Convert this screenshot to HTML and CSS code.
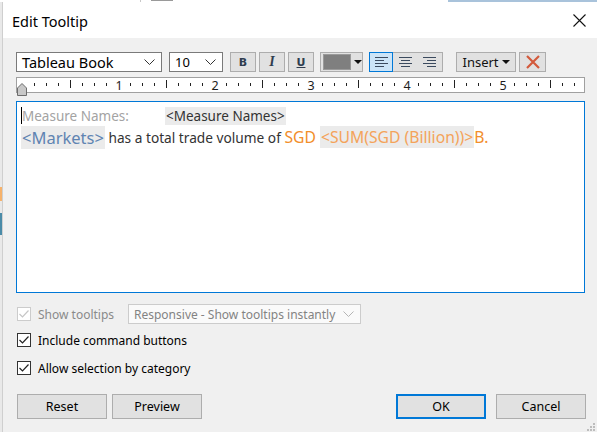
FILE: index.html
```html
<!DOCTYPE html>
<html>
<head>
<meta charset="utf-8">
<link rel="stylesheet" href="styles.css">
</head>
<body>
<div class="screen">
  <div class="bgstrip"><span class="bg-bit b1"></span><span class="bg-bit b2"></span><span class="bg-bit b3"></span></div>
  <div class="main">
    <div class="bgleft">
      <div class="bl-orange"></div>
      <div class="bl-teal"></div>
    </div>
    <div class="dialog">
      <div class="titlebar">
        <span class="title">Edit Tooltip</span>
        <svg class="close" width="13" height="13" viewBox="0 0 13 13"><path d="M0.5 0.5 L12.5 12.5 M12.5 0.5 L0.5 12.5" stroke="#111" stroke-width="1.1"/></svg>
      </div>
      <div class="body">
        <div class="toolbar">
          <div class="combo font-combo"><span>Tableau Book</span><svg class="chev" width="11" height="6" viewBox="0 0 11 6"><path d="M0.5 0.5 L5.5 5.5 L10.5 0.5" fill="none" stroke="#333" stroke-width="1"/></svg></div>
          <div class="combo size-combo"><span>10</span><svg class="chev" width="11" height="6" viewBox="0 0 11 6"><path d="M0.5 0.5 L5.5 5.5 L10.5 0.5" fill="none" stroke="#333" stroke-width="1"/></svg></div>
          <div class="tbtn fmt b">B</div>
          <div class="tbtn fmt i">I</div>
          <div class="tbtn fmt u">U</div>
          <div class="tbtn color-btn"><span class="swatch"></span><span class="tri"></span></div>
          <div class="align-group">
            <div class="abtn sel"><svg width="13" height="10" viewBox="0 0 13 10"><path d="M0 0.5H13M0 3.5H9M0 6.5H13M0 9.5H9" stroke="#3b4a5e" stroke-width="1"/></svg></div>
            <div class="abtn"><svg width="13" height="10" viewBox="0 0 13 10"><path d="M0 0.5H13M2 3.5H11M0 6.5H13M2 9.5H11" stroke="#3b4a5e" stroke-width="1"/></svg></div>
            <div class="abtn"><svg width="13" height="10" viewBox="0 0 13 10"><path d="M0 0.5H13M4 3.5H13M0 6.5H13M4 9.5H13" stroke="#3b4a5e" stroke-width="1"/></svg></div>
          </div>
          <div class="tbtn insert"><span>Insert</span><span class="tri"></span></div>
          <div class="tbtn clear"><svg width="16" height="16" viewBox="0 0 16 16"><path d="M2 2 L14 14 M14 2 L2 14" stroke="#d35a3c" stroke-width="2.2"/></svg></div>
        </div>
        <div class="ruler">
          <svg width="567" height="14" viewBox="0 0 567 14">
            <defs>
              <pattern id="small" x="5" y="0" width="12" height="14" patternUnits="userSpaceOnUse">
                <rect x="0" y="5" width="1" height="3" fill="#222"/>
              </pattern>
              <pattern id="long" x="53" y="0" width="96" height="14" patternUnits="userSpaceOnUse">
                <rect x="0" y="2" width="1" height="8" fill="#222"/>
              </pattern>
            </defs>
            <rect x="10" y="0" width="557" height="14" fill="url(#small)"/>
            <rect x="40" y="0" width="527" height="14" fill="url(#long)"/>
            <rect x="98" y="0" width="8" height="14" fill="#fff"/>
            <rect x="194" y="0" width="8" height="14" fill="#fff"/>
            <rect x="290" y="0" width="8" height="14" fill="#fff"/>
            <rect x="386" y="0" width="8" height="14" fill="#fff"/>
            <rect x="482" y="0" width="8" height="14" fill="#fff"/>
            <text x="102" y="11.5" class="rnum">1</text>
            <text x="198" y="11.5" class="rnum">2</text>
            <text x="294" y="11.5" class="rnum">3</text>
            <text x="390" y="11.5" class="rnum">4</text>
            <text x="486" y="11.5" class="rnum">5</text>
          </svg>
          <svg class="indent" width="10" height="13" viewBox="0 0 10 13"><path d="M0.5 12.5 V5 L5 0.5 L9.5 5 V12.5 Z" fill="#c8c8c8" stroke="#6d6d6d" stroke-width="1"/></svg>
        </div>
        <div class="editor">
          <div class="line1"><span class="caret"></span><span class="lbl">Measure Names:</span><span class="fld dark">&lt;Measure Names&gt;</span></div>
          <div class="line2"><span class="fld blue">&lt;Markets&gt;</span><span class="plain"> has a total trade volume of </span><span class="orange">SGD </span><span class="fld orange">&lt;SUM(SGD (Billion))&gt;</span><span class="orange">B.</span></div>
        </div>
        <div class="opt-row row-show">
          <span class="cb disabled"><svg width="10" height="8" viewBox="0 0 10 8"><path d="M0.5 4 L3.5 7 L9.5 0.5" fill="none" stroke="#c6c6c6" stroke-width="1.2"/></svg></span>
          <span class="cb-label muted show-label">Show tooltips</span>
          <div class="combo resp-combo"><span>Responsive - Show tooltips instantly</span><svg class="chev" width="11" height="6" viewBox="0 0 11 6"><path d="M0.5 0.5 L5.5 5.5 L10.5 0.5" fill="none" stroke="#b5b5b5" stroke-width="1"/></svg></div>
        </div>
        <div class="opt-row row-include">
          <span class="cb"><svg width="10" height="8" viewBox="0 0 10 8"><path d="M0.5 4 L3.5 7 L9.5 0.5" fill="none" stroke="#222" stroke-width="1.2"/></svg></span>
          <span class="cb-label">Include command buttons</span>
        </div>
        <div class="opt-row row-allow">
          <span class="cb"><svg width="10" height="8" viewBox="0 0 10 8"><path d="M0.5 4 L3.5 7 L9.5 0.5" fill="none" stroke="#222" stroke-width="1.2"/></svg></span>
          <span class="cb-label">Allow selection by category</span>
        </div>
        <div class="btn-row">
          <div class="btn">Reset</div>
          <div class="btn">Preview</div>
          <div class="spacer"></div>
          <div class="btn ok">OK</div>
          <div class="btn">Cancel</div>
        </div>
      </div>
      <svg class="grip" width="9" height="9" viewBox="0 0 9 9">
        <rect x="7" y="1" width="2" height="2" fill="#bdbdbd"/>
        <rect x="4" y="4" width="2" height="2" fill="#bdbdbd"/>
        <rect x="7" y="4" width="2" height="2" fill="#bdbdbd"/>
        <rect x="1" y="7" width="2" height="2" fill="#bdbdbd"/>
        <rect x="4" y="7" width="2" height="2" fill="#bdbdbd"/>
        <rect x="7" y="7" width="2" height="2" fill="#bdbdbd"/>
      </svg>
    </div>
  </div>
</div>
</body>
</html>
```

FILE: styles.css
```css
* { box-sizing: border-box; }
html, body { margin: 0; padding: 0; }
body {
  width: 597px;
  height: 432px;
  overflow: hidden;
  background: #f0f0f0;
  font-family: "Noto Sans", "Open Sans", sans-serif;
  font-size: 12px;
  color: #000;
}
.screen { width: 597px; height: 432px; display: flex; flex-direction: column; }
.bgstrip {
  height: 2px;
  background: #fff;
  display: flex;
  align-items: flex-start;
}
.bg-bit { display: block; height: 2px; }
.b1 { width: 1px; margin-left: 140px; background: #c8c8c8; }
.b2 { width: 22px; margin-left: 10px; background: #9a9a9a; height: 1px; }
.b3 { width: 150px; margin-left: 275px; background: #a9c3db; }
.main { flex: 1; display: flex; }
.bgleft {
  width: 3px;
  background: #e9e9e9;
  border-right: 1px solid #cfcfcf;
  display: flex;
  flex-direction: column;
  padding-top: 185px;
}
.bl-orange { height: 14px; width: 2px; background: #f6b26b; }
.bl-teal { height: 22px; width: 2px; background: #4a8ba8; margin-top: 12px; }
.dialog { flex: 1; display: flex; flex-direction: column; position: relative; background: #f0f0f0; }
.titlebar {
  height: 36px;
  background: #fff;
  display: flex;
  align-items: center;
  padding-left: 9px;
  padding-right: 11px;
  justify-content: space-between;
}
.title { font-size: 14.5px; color: #000; margin-top: 1px; }
.close { margin-top: 1px; }
.body { padding: 0 9px 0 13px; display: flex; flex-direction: column; }

.toolbar { display: flex; margin-top: 14px; height: 20px; align-items: stretch; }
.combo {
  background: #fff;
  border: 1px solid #7a7a7a;
  display: flex;
  align-items: center;
  justify-content: space-between;
  padding: 0 6px 0 5px;
  font-size: 13px;
  color: #000;
  white-space: nowrap;
}
.font-combo { width: 146px; font-size: 14.5px; }
.size-combo { width: 54px; margin-left: 7px; }
.tbtn {
  background: #e1e1e1;
  border: 1px solid #adadad;
  display: flex;
  align-items: center;
  justify-content: center;
}
.fmt { width: 26px; margin-left: 3px; font-size: 13px; color: #2f3d4f; font-weight: 700; }
.fmt.b { margin-left: 7px; font-family: "DejaVu Sans", sans-serif; font-size: 11px; }
.fmt.i { font-style: italic; font-family: "Liberation Serif", serif; font-size: 14px; }
.fmt.u { text-decoration: underline; font-family: "DejaVu Sans", sans-serif; font-size: 11px; }
.color-btn { width: 43px; margin-left: 6px; justify-content: flex-start; padding-left: 2px; gap: 3px; }
.swatch { width: 29px; height: 16px; background: #7f7f7f; border: 1px solid #9a9a9a; }
.tri { width: 0; height: 0; border-left: 4px solid transparent; border-right: 4px solid transparent; border-top: 4px solid #111; }
.align-group { display: flex; margin-left: 6px; border: 1px solid #adadad; background: #e1e1e1; width: 74px; }
.abtn { flex: 1; display: flex; align-items: center; justify-content: center; }
.abtn.sel { background: #cce4f7; outline: 1px solid #0078d7; outline-offset: -1px; margin: -1px 0 -1px -1px; }
.insert { width: 60px; margin-left: 13px; font-size: 13px; gap: 3px; color: #111; }
.clear { width: 27px; margin-left: 3px; }

.ruler {
  margin-top: 5px;
  height: 16px;
  width: 569px;
  background: #fff;
  border: 1px solid #a0a0a0;
  position: relative;
}
.ruler svg:first-child { display: block; overflow: visible; }
.rnum { font-family: "Noto Sans", sans-serif; font-size: 12.5px; fill: #1d1d1d; text-anchor: middle; }
.indent { position: absolute; left: 0px; top: 5px; }

.editor {
  margin-top: 8px;
  height: 192px;
  width: 569px;
  background: #fff;
  border: 1px solid #0078d7;
  padding: 4px 4px 0 4px;
  font-family: "Noto Sans", sans-serif;
}
.line1 { height: 19px; display: flex; align-items: center; font-size: 13.5px; }
.caret { display: inline-block; width: 1px; height: 17px; background: #000; margin-right: -1px; }
.lbl { color: #a3a3a3; width: 144px; padding-left: 1px; }
.fld { background: #ebebeb; padding: 0 1px; }
.dark { color: #333; }
.line2 { height: 24px; display: flex; align-items: center; white-space: pre; }
.blue { color: #5f84b2; font-size: 16.5px; line-height: 23px; }
.plain { color: #333; font-size: 13.7px; }
.orange { color: #f28e2b; font-size: 15.7px; line-height: 22px; }
.fld.orange { color: #f4a35a; }

.opt-row { display: flex; align-items: center; height: 20px; }
.row-show { margin-top: 11px; }
.row-include { margin-top: 6px; }
.row-allow { margin-top: 8px; }
.cb {
  width: 14px; height: 14px;
  margin-left: 1px;
  border: 1px solid #333;
  background: #fff;
  display: flex; align-items: center; justify-content: center;
  flex: none;
}
.cb.disabled { border-color: #cccccc; }
.cb-label { margin-left: 7px; font-size: 12px; color: #000; white-space: nowrap; }
.show-label { width: 90px; }
.muted { color: #8a8a8a; }
.resp-combo {
  margin-left: 0;
  width: 233px;
  height: 20px;
  border-color: #cccccc;
  background: #fafafa;
  color: #838383;
  font-size: 12px;
}

.btn-row { display: flex; margin-top: 16px; height: 25px; }
.btn {
  width: 90px;
  background: #e1e1e1;
  border: 1px solid #adadad;
  display: flex; align-items: center; justify-content: center;
  font-size: 12.5px;
  color: #000;
}
.btn-row .btn:first-child { margin-left: 1px; }
.btn-row .btn:nth-child(2) { margin-left: 5px; }
.spacer { flex: 1; }
.btn.ok { border: 2px solid #0078d7; }
.btn-row .btn:last-child { margin-left: 10px; margin-right: 2px; }
.grip { position: absolute; right: 2px; bottom: 1px; }
```
